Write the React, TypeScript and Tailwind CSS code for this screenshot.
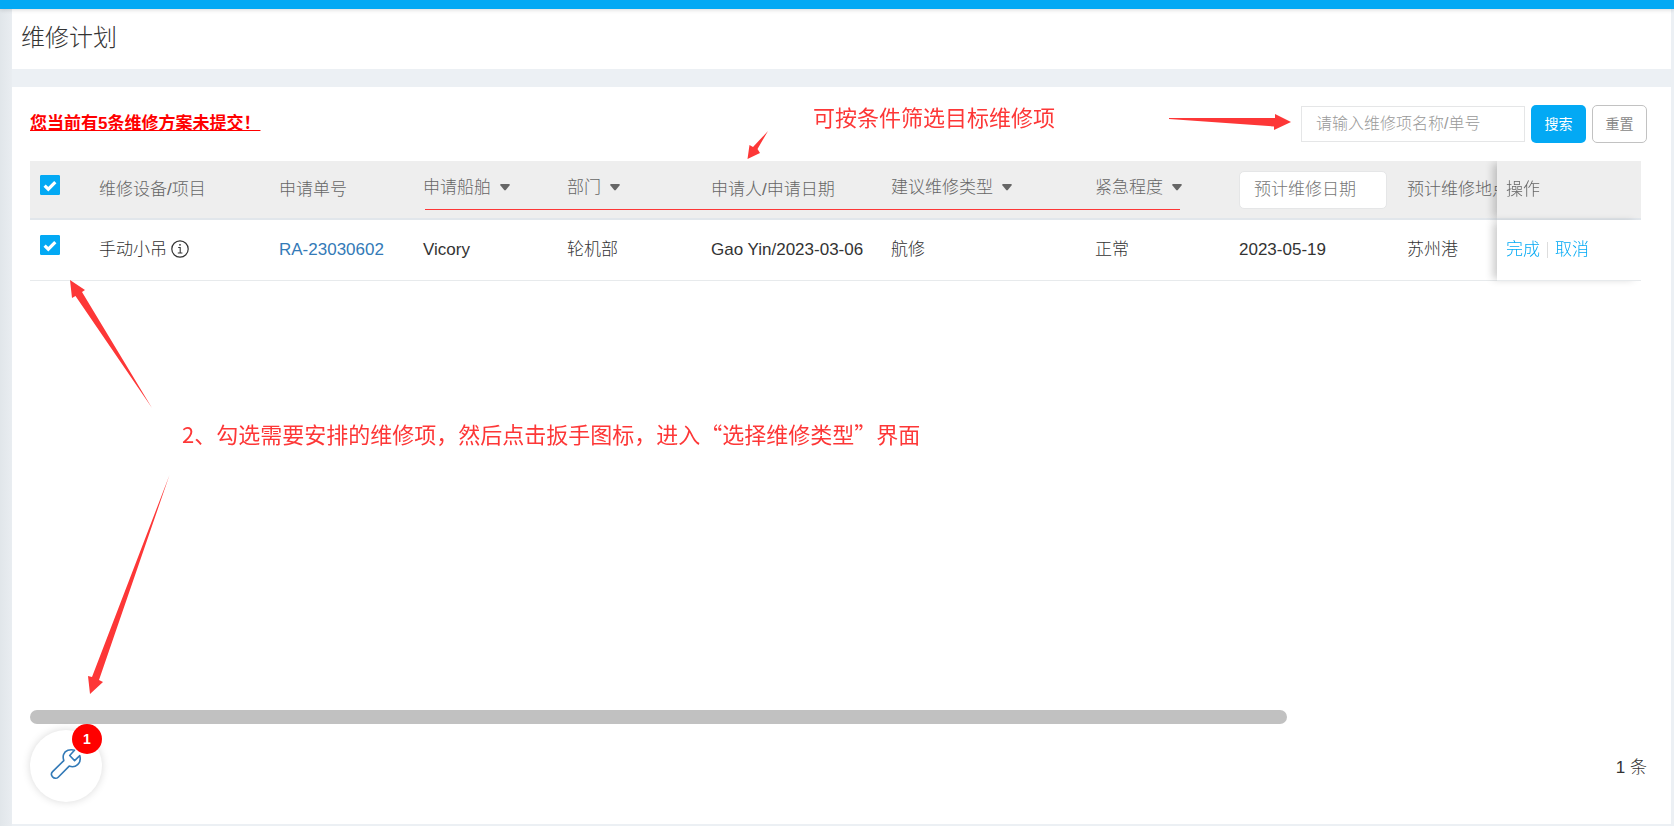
import React, { useState } from "react";

type Filter = {
  label: string;
  options: string[];
}

const FILTERS: Record<string, Filter> = {
  ship: { label: "申请船舶", options: ["Vicory"] },
  department: { label: "部门", options: ["轮机部"] },
  type: { label: "建议维修类型", options: ["航修"] },
  urgency: { label: "紧急程度", options: ["正常"] },
};

const ROWS = [
  {
    name: "手动小吊",
    code: "RA-23030602",
    ship: "Vicory",
    department: "轮机部",
    applicant: "Gao Yin/2023-03-06",
    type: "航修",
    urgency: "正常",
    date: "2023-05-19",
    place: "苏州港",
  },
];

const App = () => {
  const [checked, setChecked] = useState<boolean[]>(ROWS.map(() => true));
  const count = checked.filter(Boolean).length;

  return (
    <div className="relative flex min-h-screen flex-col overflow-hidden bg-[#ecf0f4] font-['Liberation_Sans','Noto_Sans_CJK_SC',sans-serif] text-[17px] leading-6 font-light text-[#333]">
      <div className="relative z-10 h-[9px] bg-[#03a9f4] shadow-[0_1px_4px_rgba(0,0,0,0.15)]" />
      <div className="flex flex-1">
        <div className="w-3 bg-linear-to-r from-[#e1e6ea] to-[#e9edf1]" />
        <div className="mr-[3px] mb-[2px] flex min-w-0 flex-1 flex-col gap-[18px]">
          <header className="h-[60px] bg-white px-[9px] pt-[11px]">
            <h1 className="text-2xl leading-9 font-light">维修计划</h1>
          </header>

          <main className="flex flex-1 flex-col bg-white pt-[18px] pr-6 pb-[22px] pl-[18px]">
            <Toolbar />

            <div className="mt-[18px] mr-[6px] flex-1 overflow-hidden">
              <table className="w-[2065px] table-fixed border-separate border-spacing-0 text-left">
                <thead>
                  <tr className="h-[59px] text-[#666]">
                    <HeadCell width="w-[60px]">
                      <Checkbox
                        label="全选"
                        checked={count === ROWS.length}
                        onChange={(value) => setChecked(ROWS.map(() => value))}
                      />
                    </HeadCell>
                    <HeadCell width="w-[180px]">维修设备/项目</HeadCell>
                    <HeadCell width="w-[144px]">申请单号</HeadCell>
                    <HeadCell width="w-[144px]"><FilterSelect {...FILTERS.ship} /></HeadCell>
                    <HeadCell width="w-[144px]"><FilterSelect {...FILTERS.department} /></HeadCell>
                    <HeadCell width="w-[180px]">申请人/申请日期</HeadCell>
                    <HeadCell width="w-[204px]"><FilterSelect {...FILTERS.type} /></HeadCell>
                    <HeadCell width="w-[144px]"><FilterSelect {...FILTERS.urgency} /></HeadCell>
                    <HeadCell width="w-[168px]">
                      <input
                        aria-label="预计维修日期"
                        placeholder="预计维修日期"
                        className="block h-[38px] w-[148px] rounded-[5px] border border-[#e5e6e7] bg-white px-[14px] placeholder:text-[#777]"
                      />
                    </HeadCell>
                    <HeadCell width="w-[168px]">预计维修地点</HeadCell>
                    <HeadCell width="w-auto" />
                    <th className="sticky right-0 w-[144px] border-b-2 border-[#e1e6eb] bg-[#eee] pl-[9px] font-light shadow-[-6px_0_8px_-2px_rgba(0,0,0,0.2)]">
                      操作
                    </th>
                  </tr>
                </thead>
                <tbody>
                  {ROWS.map((row, index) => (
                    <tr key={row.code} className="h-[61px]">
                      <Cell>
                        <Checkbox
                          label={row.name}
                          checked={checked[index]}
                          onChange={(value) => setChecked(checked.map((c, i) => (i === index ? value : c)))}
                        />
                      </Cell>
                      <Cell>
                        <span className="flex items-center gap-1">
                          {row.name}
                          <InfoIcon />
                        </span>
                      </Cell>
                      <Cell><a href="#detail" className="text-[#337ab7]">{row.code}</a></Cell>
                      <Cell>{row.ship}</Cell>
                      <Cell>{row.department}</Cell>
                      <Cell>{row.applicant}</Cell>
                      <Cell>{row.type}</Cell>
                      <Cell>{row.urgency}</Cell>
                      <Cell>{row.date}</Cell>
                      <Cell>{row.place}</Cell>
                      <Cell />
                      <td className="sticky right-0 border-b border-[#e7eaec] bg-white pl-[9px] shadow-[-6px_0_8px_-2px_rgba(0,0,0,0.2)]">
                        <div className="flex items-center gap-[7px] text-[#03a9f4]">
                          <a href="#finish">完成</a>
                          <span className="h-4 w-px bg-[#ddd]" />
                          <a href="#cancel">取消</a>
                        </div>
                      </td>
                    </tr>
                  ))}
                </tbody>
              </table>
            </div>

            <div className="mr-[6px] h-[14px]">
              <div className="h-full w-[78%] rounded-full bg-[#c1c1c1]" />
            </div>

            <footer className="mt-[6px] flex items-center justify-between">
              <button
                type="button"
                aria-label="选择维修类型"
                className="relative flex size-[72px] items-center justify-center rounded-full bg-white shadow-[0_0_8px_rgba(0,0,0,0.15)]"
              >
                <WrenchIcon />
                <span className="absolute -top-[6px] right-0 size-[30px] rounded-full bg-[#f00] text-center text-sm leading-[30px] font-bold text-white">
                  {count}
                </span>
              </button>
              <p className="pt-1">{ROWS.length} 条</p>
            </footer>
          </main>
        </div>
      </div>

      <Guide />
    </div>
  )
}

const Toolbar = () => {
  return (
    <div className="flex items-center justify-between">
      <a href="#pending" className="font-bold text-[#f00] underline">
        您当前有5条维修方案未提交！
      </a>
      <form className="flex items-center gap-[6px]" onSubmit={(e) => e.preventDefault()}>
        <input
          aria-label="维修项名称/单号"
          placeholder="请输入维修项名称/单号"
          className="h-9 w-[224px] border border-[#e5e6e7] px-[14px] text-base placeholder:text-[#999]"
        />
        <button type="submit" className="h-[38px] w-[55px] rounded-[5px] bg-[#03a9f4] text-sm font-normal text-white">
          搜索
        </button>
        <button type="reset" className="h-[38px] w-[55px] rounded-[5px] border border-[#c2c2c2] bg-white text-sm font-normal text-[#888]">
          重置
        </button>
      </form>
    </div>
  )
}

interface HeadCellType {
  width: string;
  children?: React.ReactNode;
}

const HeadCell = ({ width, children }: HeadCellType) => {
  return (
    <th className={`${width} border-b-2 border-[#e1e6eb] bg-[#eee] pl-[9px] font-light whitespace-nowrap`}>
      {children}
    </th>
  );
}

const Cell = ({ children }: { children?: React.ReactNode }) => {
  return (
    <td className="border-b border-[#e7eaec] pl-[9px] whitespace-nowrap">
      {children}
    </td>
  );
}

const FilterSelect = ({ label, options }: Filter) => {
  return (
    <label className="flex items-center gap-[9px] pb-1">
      <select aria-label={label} className="field-sizing-content appearance-none bg-transparent">
        <option>{label}</option>
        {options.map((option) => (
          <option key={option}>{option}</option>
        ))}
      </select>
      <svg width="10" height="7" viewBox="0 0 10 7" fill="#666">
        <path d="M1 0h8q1.300 .4.500 1.500L5.800 6.100q-.8.700-1.600 0L.5 1.500Q-.3.400 1 0Z" />
      </svg>
    </label>
  );
}

interface CheckboxType {
  label: string;
  checked: boolean;
  onChange: (value: boolean) => void;
}

const Checkbox = ({ label, checked, onChange }: CheckboxType) => {
  return (
    <label className="mb-[10px] ml-px grid size-5 place-items-center">
      <input
        type="checkbox"
        aria-label={label}
        checked={checked}
        onChange={(e) => onChange(e.target.checked)}
        className="col-start-1 row-start-1 size-5 appearance-none rounded-[1px] border border-[#03a9f4] bg-white checked:bg-[#03a9f4]"
      />
      <svg
        width="14"
        height="12"
        viewBox="0 0 14 12"
        fill="none"
        stroke="#fff"
        strokeWidth="3.200"
        className="pointer-events-none col-start-1 row-start-1 mt-[2px]"
      >
        <path d="M1.600 5.600L5.300 9.200L12.300 2.200" />
      </svg>
    </label>
  );
}

const InfoIcon = () => {
  return (
    <svg width="18" height="18" viewBox="0 0 18 18" fill="none" stroke="#333" className="mb-[2px]">
      <circle cx="9" cy="9" r="8.200" strokeWidth="1.200" />
      <path d="M7.200 7.500h2v5.300M6.800 13h4.600" strokeWidth="1.100" />
      <circle cx="9" cy="4.800" r=".9" fill="#333" stroke="none" />
    </svg>
  );
}

const WrenchIcon = () => {
  return (
    <svg
      width="32"
      height="32"
      viewBox="0 0 32 32"
      fill="none"
      stroke="#337ab7"
      strokeWidth="1.600"
      strokeLinejoin="round"
      className="mb-[4px]"
    >
      <path d="M24.500 2.200C20 .8 15 2.600 13.600 6.500C12.900 8.400 13.100 10.500 13.800 12.600L2.600 23.600C1.200 25 1.200 27.300 2.600 28.900C4.200 30.600 6.600 30.800 8.200 29.200L19.200 18.100C22.200 19.100 25.400 18.700 27.600 16.600C30 14.400 30.700 10.900 29.800 7.600L24.600 12.600L19.700 7.500Z" />
    </svg>
  );
}

// Red walkthrough notes and arrows drawn above the page
const Guide = () => {
  return (
    <div className="pointer-events-none absolute inset-0 z-20 font-['Noto_Sans_CJK_SC',sans-serif] text-[22px] leading-8 font-normal whitespace-nowrap text-[#fd3737]">
      <p className="absolute top-[100px] left-[813px]">可按条件筛选目标维修项</p>
      <p className="absolute top-[417px] left-[182px]">2、勾选需要安排的维修项，然后点击扳手图标，进入“选择维修类型”界面</p>
      <svg width="1674" height="826" viewBox="0 0 1674 826" fill="#fd3737" className="absolute top-0 left-0">
        <path d="M768 131L757.500 149L760 153L747.500 159L749.500 145L753 147Z" />
        <path d="M1169 118L1275 118L1275 114L1291 122L1274 130L1274 126.500L1169 119Z" />
        <path d="M152 408L75.500 296L72 298L70 280L85 290L82 292Z" />
        <path d="M169.500 475L99 680L103 682L90 694L88 676L92 677Z" />
        <path d="M425 209h755v1h-755z" />
      </svg>
    </div>
  );
}

export default App;
